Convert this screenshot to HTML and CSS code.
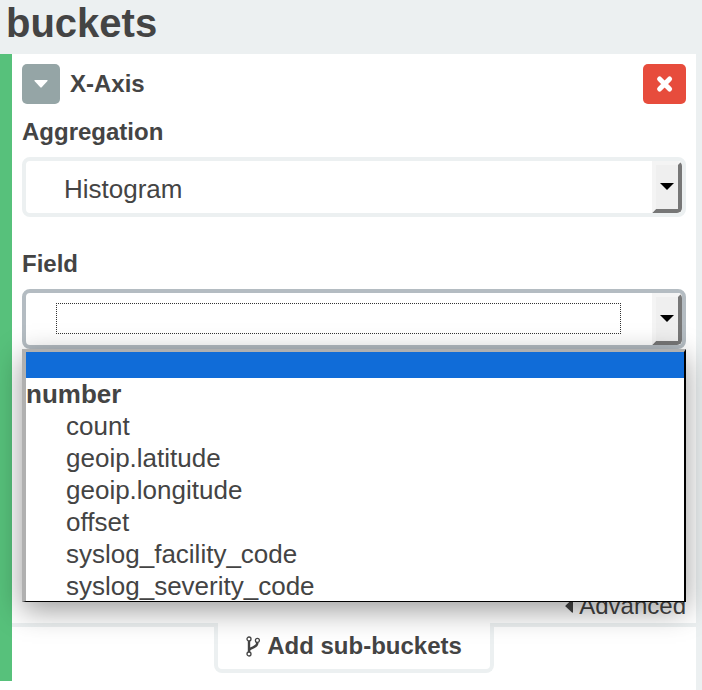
FILE: index.html
```html
<!DOCTYPE html>
<html lang="en">
<head>
  <meta charset="UTF-8">
  <meta name="viewport" content="width=device-width, initial-scale=1">
  <title>buckets</title>
  <link rel="stylesheet" href="styles.css">
</head>
<body>
  <h2>buckets</h2>

  <div class="panel">
    <div class="bucket">
      <div class="bucket-body">
        <div class="bucket-header">
          <button type="button" class="btn toggle" aria-label="Toggle editor">
            <svg width="14" height="8" viewBox="0 0 14 8"><path d="M1 0h12q1 0 .5 1L7.7 7.3q-.7.7-1.4 0L.5 1Q0 0 1 0z" fill="#fff"/></svg>
          </button>
          <span class="title">X-Axis</span>
          <button type="button" class="btn remove" aria-label="Remove dimension">
            <svg width="18" height="18" viewBox="0 0 18 18"><path d="M3.6 4l10 10M13.6 4l-10 10" stroke="#fff" stroke-width="5" stroke-linecap="round"/></svg>
          </button>
        </div>

        <label for="aggregation">Aggregation</label>
        <div class="select-wrap">
          <select id="aggregation">
            <option>Histogram</option>
          </select>
          <span class="arrow"></span>
        </div>

        <label for="field">Field</label>
        <div class="select-wrap open">
          <select id="field">
            <option></option>
            <option>count</option>
            <option>geoip.latitude</option>
            <option>geoip.longitude</option>
            <option>offset</option>
            <option>syslog_facility_code</option>
            <option>syslog_severity_code</option>
          </select>
          <span class="focus"></span>
          <span class="arrow"></span>
          <ul class="menu" role="listbox" aria-label="Field">
            <li class="selected" role="option" aria-selected="true"></li>
            <li class="group" role="presentation">number</li>
            <li role="option">count</li>
            <li role="option">geoip.latitude</li>
            <li role="option">geoip.longitude</li>
            <li role="option">offset</li>
            <li role="option">syslog_facility_code</li>
            <li role="option">syslog_severity_code</li>
          </ul>
        </div>

        <a href="#" class="advanced">
          <svg width="8" height="14" viewBox="0 0 8 14"><path d="M8 1v12q0 1-1 .5L.6 7.6q-.6-.6 0-1.2L7 .5Q8 0 8 1z" fill="#444"/></svg>
          Advanced
        </a>
      </div>

      <div class="add-row">
        <button type="button" class="add">
          <svg width="14" height="21" viewBox="0 0 14 21" fill="none" stroke="#444">
            <circle cx="3" cy="3" r="2" stroke-width="1.3"/>
            <circle cx="3" cy="18" r="2" stroke-width="1.3"/>
            <circle cx="11.4" cy="4.4" r="2" stroke-width="1.3"/>
            <path d="M3 5v11M11.4 6.5c0 6-7.4 4-8.4 8" stroke-width="2.4"/>
          </svg>
          Add sub-buckets
        </button>
      </div>
    </div>
  </div>
</body>
</html>
```
FILE: styles.css
```css
* {
  box-sizing: border-box;
}
body {
  margin: 0;
  background: #ecf0f1;
  color: #444;
  font-family: "Liberation Sans", Arial, sans-serif;
  font-size: 24px;
}
h2 {
  margin: 0;
  padding: 0 6px 8px;
  font-size: 40px;
  line-height: 46px;
}
.panel {
  margin-right: 6px;
  padding-bottom: 9px;
  background: #fff;
}
.bucket {
  padding-bottom: 8px;
  border-left: 12px solid #57c17b;
}
.bucket-body {
  padding: 10px 10px 0;
}
.bucket-header {
  display: flex;
  align-items: center;
  gap: 10px;
  margin-bottom: 12px;
}
.title {
  flex: 1;
  font-weight: bold;
}
.btn {
  display: flex;
  align-items: center;
  justify-content: center;
  height: 40px;
  padding: 0;
  border: none;
  border-radius: 5px;
  cursor: pointer;
}
.toggle {
  width: 38px;
  background: #95a5a6;
}
.remove {
  width: 43px;
  background: #e74c3c;
}
label {
  display: block;
  margin-bottom: 9px;
  font-weight: bold;
  line-height: 32px;
}
.select-wrap {
  position: relative;
  margin-bottom: 31px;
}
select {
  display: block;
  width: 100%;
  height: 60px;
  padding: 4px 60px 0 38px;
  border: 4px solid #ecf0f1;
  border-radius: 8px;
  outline: none;
  appearance: none;
  background: #fff;
  color: #444;
  font-family: inherit;
  font-size: 26px;
}
.open select {
  border-color: #b4bcc2;
}
.arrow {
  position: absolute;
  top: 4px;
  right: 4px;
  width: 30px;
  height: 52px;
  border: 4px solid;
  border-color: #f4f4f4 #777 #777 #f4f4f4;
  border-radius: 0 5px 5px 0;
  background: #efefef;
  pointer-events: none;
}
.arrow::after {
  content: "";
  position: absolute;
  top: 18px;
  left: 4px;
  border: 7px solid transparent;
  border-top-color: #000;
  border-bottom: none;
}
.focus {
  position: absolute;
  top: 14px;
  left: 34px;
  right: 65px;
  height: 31px;
  border: 1px dotted #333;
  pointer-events: none;
}
.menu {
  position: absolute;
  z-index: 1;
  top: 100%;
  left: 0;
  right: 0;
  margin: 0;
  padding: 0;
  border: solid;
  border-width: 3px 2px 1px 4px;
  border-color: #b0b0b0 #000 #000 #b0b0b0;
  background: #fff;
  box-shadow: 0 8px 28px rgba(0, 0, 0, 0.4);
  list-style: none;
  font-size: 26px;
  line-height: 32px;
}
.menu li {
  height: 32px;
  padding-left: 40px;
}
.menu li:last-child {
  height: 31px;
}
.menu .group {
  padding-left: 0;
  font-weight: bold;
}
.menu .selected {
  height: 26px;
  background: #106cd8;
}
.advanced {
  display: flex;
  align-items: center;
  justify-content: flex-end;
  gap: 6px;
  margin-top: 241px;
  padding-bottom: 1px;
  color: #444;
  line-height: 32px;
  text-decoration: none;
}
.add-row {
  display: flex;
  justify-content: center;
}
.add-row::before,
.add-row::after {
  content: "";
  flex: 1;
  border-top: 4px solid #ecf0f1;
}
.add {
  display: flex;
  align-items: center;
  gap: 7px;
  height: 50px;
  padding: 0 28px;
  border: 4px solid #ecf0f1;
  border-top: none;
  border-radius: 0 0 8px 8px;
  background: #fff;
  color: #444;
  font-family: inherit;
  font-size: 24px;
  font-weight: bold;
  cursor: pointer;
}
```
